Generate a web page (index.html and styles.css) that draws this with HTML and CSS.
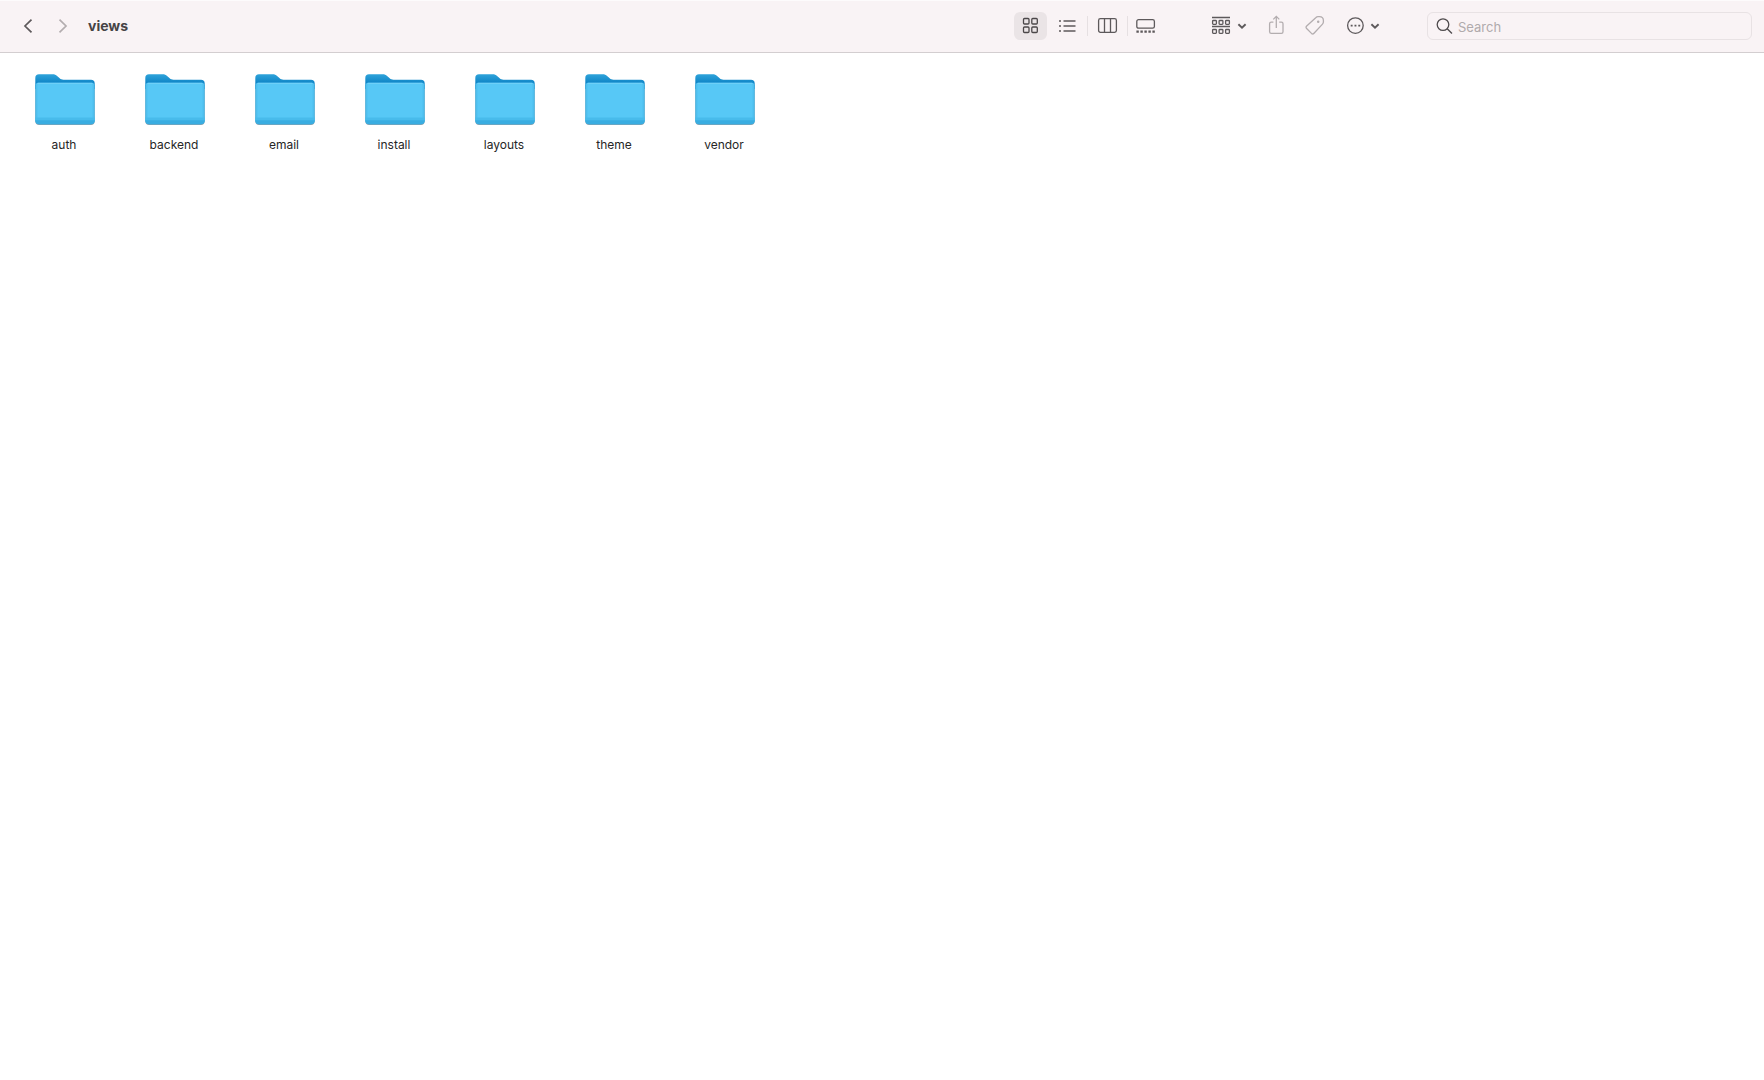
FILE: index.html
```html
<!DOCTYPE html>
<html lang="en">
<head>
<meta charset="utf-8">
<title>views</title>
<link rel="stylesheet" href="styles.css">
</head>
<body>
<svg class="symbols" width="0" height="0" aria-hidden="true">
  <defs>
    <linearGradient id="back-fill" x1="0" y1="0" x2="0" y2="1">
      <stop offset="0" stop-color="#2fa3da"/>
      <stop offset="0.6" stop-color="#0e84c6"/>
      <stop offset="1" stop-color="#0b7fc2"/>
    </linearGradient>
    <linearGradient id="front-fill" x1="0" y1="0" x2="1" y2="0">
      <stop offset="0" stop-color="#48b8e8"/>
      <stop offset="0.05" stop-color="#57c8f6"/>
      <stop offset="0.95" stop-color="#57c8f6"/>
      <stop offset="1" stop-color="#48b8e8"/>
    </linearGradient>
    <symbol id="folder" viewBox="0 0 62 54">
      <path d="M2.300 12V48a4 4 0 0 0 4 4H57.700a4 4 0 0 0 4-4V12z" fill="#8499a4"/>
      <path d="M2.300 14V5a3.700 3.700 0 0 1 3.700-3.700H19.500c2.200 0 3.300.6 4.600 1.700l2.600 2.300c1.100 1 2 1.400 3.800 1.400H58a3.700 3.700 0 0 1 3.700 3.700V16H2.300z" fill="url(#back-fill)"/>
      <path d="M2.300 12.600a3 3 0 0 1 3-2.800H58.700a3 3 0 0 1 3 2.800V47.300a4 4 0 0 1-4 4H6.300a4 4 0 0 1-4-4z" fill="url(#front-fill)"/>
      <path d="M4.500 10.300H59.500" stroke="#74d2f9" stroke-width="1"/>
      <path d="M2.300 44.500H61.700V47.800H2.300z" fill="#48bbeb"/>
      <path d="M2.300 47.300H61.700a4 4 0 0 1-4 4H6.300a4 4 0 0 1-4-4z" fill="#39ade1"/>
    </symbol>
    <symbol id="chevron" viewBox="0 0 10 20">
      <path d="M1.400 8.300L5 11.700L8.600 8.300" stroke-width="1.900"/>
    </symbol>
  </defs>
</svg>

<header class="toolbar">
  <nav class="history" aria-label="History">
    <button class="tool history-button" aria-label="Back">
      <svg class="icon" width="10" height="20" viewBox="0 0 10 20"><path d="M8.500 3.700L2 10L8.500 16.300"/></svg>
    </button>
    <button class="tool history-button dim" aria-label="Forward" disabled>
      <svg class="icon" width="10" height="20" viewBox="0 0 10 20"><path d="M1.500 3.700L8 10L1.500 16.300"/></svg>
    </button>
  </nav>
  <h1 class="title">views</h1>

  <div class="view-modes" role="group" aria-label="View">
    <button class="tool selected" aria-label="Icons" aria-pressed="true">
      <svg class="icon" width="21" height="20" viewBox="0 0 21 20"><rect x="3.500" y="2.500" width="5.500" height="5.500" rx="1"/><rect x="11.800" y="2.500" width="5.500" height="5.500" rx="1"/><rect x="3.500" y="11" width="5.500" height="5.500" rx="1"/><rect x="11.800" y="11" width="5.500" height="5.500" rx="1"/></svg>
    </button>
    <button class="tool view-list" aria-label="List">
      <svg class="icon" width="20" height="20" viewBox="0 0 20 20"><path d="M6.500 5H18.500M6.500 10H18.500M6.500 15H18.500M2 5H4M2 10H4M2 15H4"/></svg>
    </button>
    <button class="tool view-columns" aria-label="Columns">
      <svg class="icon" width="21" height="20" viewBox="0 0 21 20"><rect x="1.600" y="2.600" width="17.800" height="13.800" rx="1.800"/><path d="M7.500 2.600V16.400M13.500 2.600V16.400"/></svg>
    </button>
    <button class="tool view-gallery" aria-label="Gallery">
      <svg class="icon" width="20" height="20" viewBox="0 0 20 20"><rect x=".8" y="3.600" width="17.600" height="8.600" rx="1.800"/><path d="M.4 15.600H2.800M4.400 15.600H6.800M8.400 15.600H10.800M12.400 15.600H14.800M16.400 15.600H18.800" stroke-width="2.200"/></svg>
    </button>
  </div>

  <div class="actions">
    <button class="tool group-by" aria-label="Group by">
      <svg class="icon" width="20" height="20" viewBox="0 0 20 20"><path d="M1 1.500H19M1 10.500H19"/><rect x="1.600" y="4.500" width="3.800" height="3.800" rx=".7"/><rect x="8.100" y="4.500" width="3.800" height="3.800" rx=".7"/><rect x="14.600" y="4.500" width="3.800" height="3.800" rx=".7"/><rect x="1.600" y="13.500" width="3.800" height="3.800" rx=".7"/><rect x="8.100" y="13.500" width="3.800" height="3.800" rx=".7"/><rect x="14.600" y="13.500" width="3.800" height="3.800" rx=".7"/></svg>
      <svg class="icon" width="10" height="20"><use href="#chevron"/></svg>
    </button>
    <button class="tool action dim" aria-label="Share" disabled>
      <svg class="icon" width="20" height="20" viewBox="0 0 20 20"><path d="M7.400 6.200H5.200a1.600 1.600 0 0 0-1.600 1.600V15.800a1.600 1.600 0 0 0 1.600 1.600H15.400a1.600 1.600 0 0 0 1.600-1.600V7.800a1.600 1.600 0 0 0-1.600-1.600H13.200M10.300 12V.6M7.300 3.400L10.300.4L13.300 3.400"/></svg>
    </button>
    <button class="tool action dim" aria-label="Tags" disabled>
      <svg class="icon" width="20" height="20" viewBox="0 0 20 20"><path d="M12 1.500Q12.800.7 14 .7H15.500Q19.300.8 19.400 4.500V6Q19.400 7.200 18.500 8.100L10 17.300Q8.800 18.600 7.500 17.400L2.600 12.500Q1.400 11.300 2.700 10.100z"/><circle cx="14.200" cy="5.800" r=".6"/></svg>
    </button>
    <button class="tool more" aria-label="More actions">
      <svg class="icon" width="20" height="20" viewBox="0 0 20 20"><circle cx="9.400" cy="9.600" r="7.800"/><path d="M4.700 9.600H6.600M8.500 9.600H10.400M12.300 9.600H14.200" stroke-width="1.900"/></svg>
      <svg class="icon" width="10" height="20"><use href="#chevron"/></svg>
    </button>
  </div>

  <label class="search">
    <svg class="icon" width="18" height="20" viewBox="0 0 18 20"><circle cx="7" cy="8.600" r="5.800"/><path d="M11.200 12.800L16 17.500"/></svg>
    <input class="search-input" type="text" placeholder="Search" aria-label="Search">
  </label>
</header>

<main>
  <ul class="files">
    <li><a class="file" href="#auth"><svg class="folder"><use href="#folder"/></svg><span>auth</span></a></li>
    <li><a class="file" href="#backend"><svg class="folder"><use href="#folder"/></svg><span>backend</span></a></li>
    <li><a class="file" href="#email"><svg class="folder"><use href="#folder"/></svg><span>email</span></a></li>
    <li><a class="file" href="#install"><svg class="folder"><use href="#folder"/></svg><span>install</span></a></li>
    <li><a class="file" href="#layouts"><svg class="folder"><use href="#folder"/></svg><span>layouts</span></a></li>
    <li><a class="file" href="#theme"><svg class="folder"><use href="#folder"/></svg><span>theme</span></a></li>
    <li><a class="file" href="#vendor"><svg class="folder"><use href="#folder"/></svg><span>vendor</span></a></li>
  </ul>
</main>
</body>
</html>
```
FILE: styles.css
```css
* {
  box-sizing: border-box;
}

body {
  margin: 0;
  background: #fff;
  color: #262626;
  font-family: Inter, "Liberation Sans", sans-serif;
  font-size: 12px;
  line-height: 16px;
}

.symbols {
  position: absolute;
}

.toolbar {
  display: flex;
  align-items: flex-start;
  padding: 11px 12px 12px;
  border-top: 1px solid #fdfbfc;
  border-bottom: 1px solid #d3ced0;
  background: #f9f3f5;
}

.history {
  display: flex;
  gap: 3px;
}

.tool {
  display: flex;
  align-items: center;
  justify-content: center;
  flex: none;
  height: 28px;
  padding: 0;
  border: 0;
  border-radius: 6px;
  background: none;
  color: #5d595b;
}

.history-button {
  width: 32px;
}

.dim {
  color: #b3adaf;
}

.icon {
  display: block;
  flex: none;
  overflow: visible;
  fill: none;
  stroke: currentColor;
  stroke-width: 1.3;
}

.history-button .icon {
  stroke-width: 1.7;
}

.title {
  margin: 0 auto 0 9px;
  color: #464345;
  font-size: 14px;
  font-weight: 700;
  line-height: 28px;
}

.view-modes,
.actions {
  display: flex;
}

.selected {
  width: 33px;
  background: #eae4e6;
  color: #4b4749;
}

.view-list {
  width: 40px;
}

.view-columns {
  justify-content: space-between;
  width: 41px;
  border-radius: 0;
}

/* Hairlines on both sides of the columns button */
.view-columns::before,
.view-columns::after {
  width: 1px;
  height: 20px;
  background: #e6e0e2;
  content: "";
}

.view-gallery {
  width: 36px;
}

.actions {
  gap: 6px;
  margin: 0 39px;
}

.group-by {
  gap: 6px;
  padding: 0 7px 0 8px;
}

.action {
  width: 32px;
}

.more {
  gap: 4px;
  padding: 0 8px 0 10px;
}

.search {
  display: flex;
  align-items: center;
  gap: 4px;
  width: 325px;
  height: 28px;
  padding: 0 8px;
  border: 1px solid #e8e2e4;
  border-radius: 6px;
  color: #4f4b4d;
}

.search-input {
  flex: 1;
  min-width: 0;
  padding: 2px 0 0;
  border: 0;
  outline: 0;
  background: none;
  color: #262626;
  font: inherit;
  font-size: 13px;
}

.search-input::placeholder {
  color: #b0aaac;
}

.files {
  display: grid;
  grid-template-columns: repeat(auto-fill, 110px);
  row-gap: 24px;
  margin: 0;
  padding: 20px 9px;
  list-style: none;
}

.file {
  display: flex;
  flex-direction: column;
  align-items: center;
  gap: 10px;
  color: inherit;
  text-decoration: none;
}

.folder {
  width: 62px;
  height: 54px;
}
```
